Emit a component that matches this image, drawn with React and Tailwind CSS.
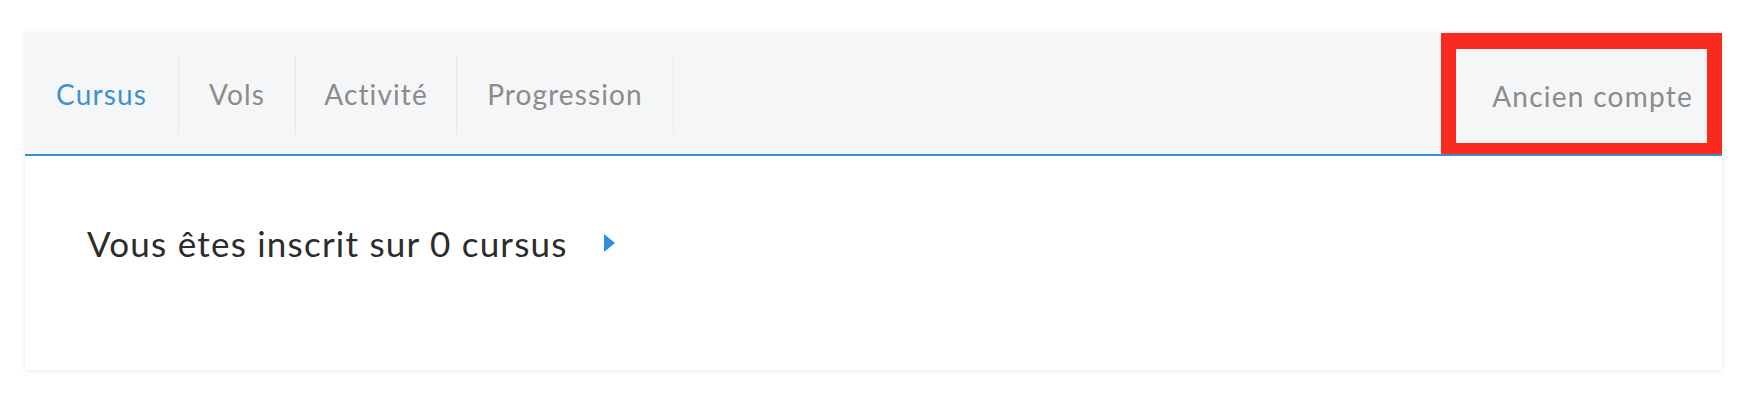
const tabs = [
  { id: 'cursus', label: 'Cursus', width: 'w-[154px]' },
  { id: 'vols', label: 'Vols', width: 'w-[117px]' },
  { id: 'activite', label: 'Activité', width: 'w-[161px]' },
  { id: 'progression', label: 'Progression', width: 'w-[217px]' },
];

export default function App() {
  const active = 'cursus';

  return (
    <div className="min-h-screen bg-white pt-[33px] pl-[25px] pr-[30px] font-['Lato',sans-serif]">
      <div className="h-[337px] bg-white shadow-[0_1px_6px_rgba(0,0,0,0.09)]">
        {/* Tabs */}
        <div className="flex h-[123px] items-center bg-[#f5f6f8] border-b-2 border-[#3b8fcf]">
          {tabs.map(tab => (
            <div
              key={tab.id}
              className={`flex h-[80px] ${tab.width} items-center justify-center border-r border-[#e6e8eb] text-[28px] tracking-[0.04em] ${
                tab.id === active ? 'text-[#3a92d5]' : 'text-[#8b8b8b]'
              }`}
            >
              {tab.label}
            </div>
          ))}
          <div className="ml-auto flex self-stretch items-center border-l-[15px] border-t-[16px] border-r-[15px] border-b-[11px] border-[#fa2a1f] pl-[36px] pr-[14px] text-[28px] tracking-[0.045em] text-[#8b8b8b]">
            Ancien compte
          </div>
        </div>

        {/* Content */}
        <div className="flex items-center pl-[62px] pt-[66px]">
          <span className="text-[35px] leading-[1.2] tracking-[0.035em] text-[#2c2c2c]">Vous êtes inscrit sur 0 cursus</span>
          <svg className="ml-[36px]" width="11" height="18" viewBox="0 0 11 18">
            <path d="M0 0 L11 9 L0 18 Z" fill="#2e8fe0" />
          </svg>
        </div>
      </div>
    </div>
  );
}
